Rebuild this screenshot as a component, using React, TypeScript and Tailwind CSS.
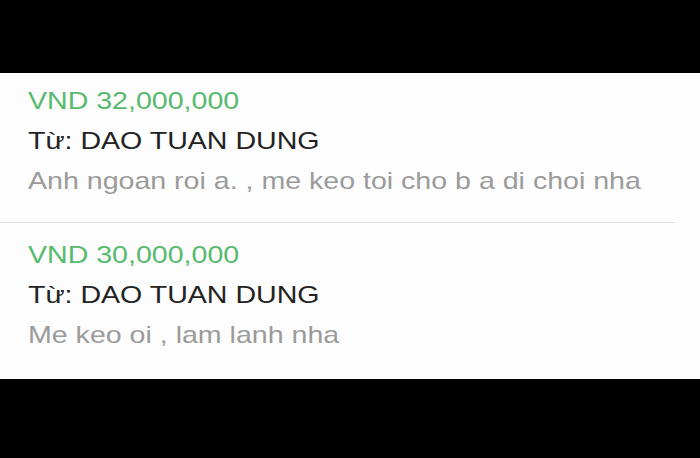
import React from 'react';

type Transfer = {
  amount: string;
  sender: string;
  note: string;
};

const transfers: Transfer[] = [
  { amount: 'VND 32,000,000', sender: 'DAO TUAN DUNG', note: 'Anh ngoan roi a. , me keo toi cho b a di choi nha' },
  { amount: 'VND 30,000,000', sender: 'DAO TUAN DUNG', note: 'Me keo oi , lam lanh nha' },
];

function Line({ className, children }: { className: string; children: React.ReactNode }) {
  return (
    <div className="h-[40px] leading-[40px] whitespace-nowrap">
      <span className={`inline-block origin-left scale-x-[1.19] text-[24px] ${className}`}>{children}</span>
    </div>
  );
}

export default function App() {
  return (
    <div className="flex h-[458px] w-[700px] flex-col bg-black font-['Liberation_Sans',Arial,sans-serif]">
      <div className="h-[73px] shrink-0" />

      <div className="h-[306px] shrink-0 bg-[#fdfdfd]">
        <div className="pl-[28px] pt-[8px] pb-[21px]">
          <Line className="text-[#58ba6d]">{transfers[0].amount}</Line>
          <Line className="text-[#232323]">Từ: {transfers[0].sender}</Line>
          <Line className="text-[#9b9b9b]">{transfers[0].note}</Line>
        </div>

        <div className="h-px w-[675px] bg-[#e3e3e3]" />

        <div className="pl-[28px] pt-[12px]">
          <Line className="text-[#58ba6d]">{transfers[1].amount}</Line>
          <Line className="text-[#232323]">Từ: {transfers[1].sender}</Line>
          <Line className="text-[#9b9b9b]">{transfers[1].note}</Line>
        </div>
      </div>

      <div className="flex-1" />
    </div>
  );
}
